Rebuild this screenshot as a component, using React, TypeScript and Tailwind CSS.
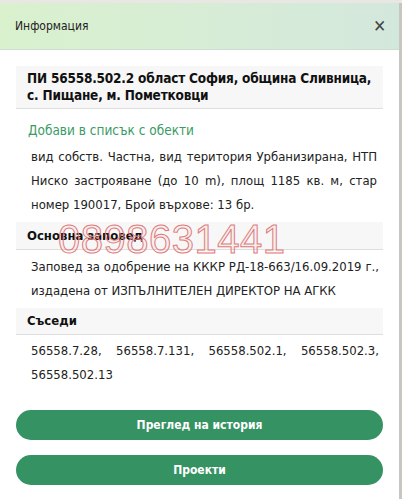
export default function App() {
  return (
    <div className="relative h-[499px] w-[402px] overflow-hidden bg-[#c9c6c1] font-['DejaVu_Sans_Condensed','Noto_Sans',sans-serif]">
      <div className="h-[3px] bg-[#e9e7e3]" />
      <div className="flex h-[496px] w-[399px] flex-col bg-white">
        <div className="flex h-[47px] items-center justify-between border-b border-[#cfdcd2] bg-gradient-to-r from-[#daf1ce] to-[#d3e8dc] pl-[15px] pr-[13px]">
          <span className="text-[12px] text-[#222]">Информация</span>
          <span className="text-[17px] font-bold leading-none text-[#444]">✕</span>
        </div>

        <div className="flex flex-col px-4 pt-[16px]">
          <div className="border-b border-[#dedede] bg-[#f7f7f7] px-[11px] py-1 text-[13.5px] font-bold leading-[17px] tracking-[-0.2px] text-[#111]">
            ПИ 56558.502.2 област София, община Сливница, с. Пищане, м. Пометковци
          </div>

          <a className="mt-[11px] pl-[12px] text-[13.5px] leading-[20px] text-[#3a9b66]">
            Добави в списък с обекти
          </a>

          <p className="mt-[5px] pl-[15px] pr-[6px] text-justify text-[13px] leading-[24px] text-[#222]">
            вид собств. Частна, вид територия Урбанизирана, НТП Ниско застрояване (до 10 m), площ 1185 кв. м, стар номер 190017, Брой върхове: 13 бр.
          </p>

          <div className="mt-[5px] flex h-[28px] items-center border-b border-[#dedede] bg-[#f7f7f7] px-[11px] text-[13px] font-bold text-[#111]">
            Основна заповед
          </div>

          <p className="mt-[5px] pl-[15px] pr-[4px] text-justify text-[13px] leading-[24px] text-[#222]">
            Заповед за одобрение на КККР РД-18-663/16.09.2019 г., издадена от ИЗПЪЛНИТЕЛЕН ДИРЕКТОР НА АГКК
          </p>

          <div className="mt-[5px] flex h-[27px] items-center border-b border-[#dedede] bg-[#f7f7f7] px-[11px] text-[13px] font-bold text-[#111]">
            Съседи
          </div>

          <p className="mt-[4px] pl-[15px] pr-[4px] text-justify text-[13px] leading-[24px] text-[#222]">
            56558.7.28, 56558.7.131, 56558.502.1, 56558.502.3, 56558.502.13
          </p>

          <div className="mt-[23px] flex flex-col gap-[15px]">
            <button className="h-[30px] rounded-full bg-[#359262] text-[12px] font-bold text-white">
              Преглед на история
            </button>
            <button className="h-[30px] rounded-full bg-[#359262] text-[12px] font-bold text-white">
              Проекти
            </button>
          </div>
        </div>
      </div>

      <div className="pointer-events-none absolute left-[58px] top-[219px] font-['Liberation_Sans',sans-serif] text-[40px] leading-none tracking-[0.5px] text-[rgba(230,120,120,0.08)] [-webkit-text-stroke:1px_#e07b7b]">
        0898631441
      </div>
    </div>
  );
}
